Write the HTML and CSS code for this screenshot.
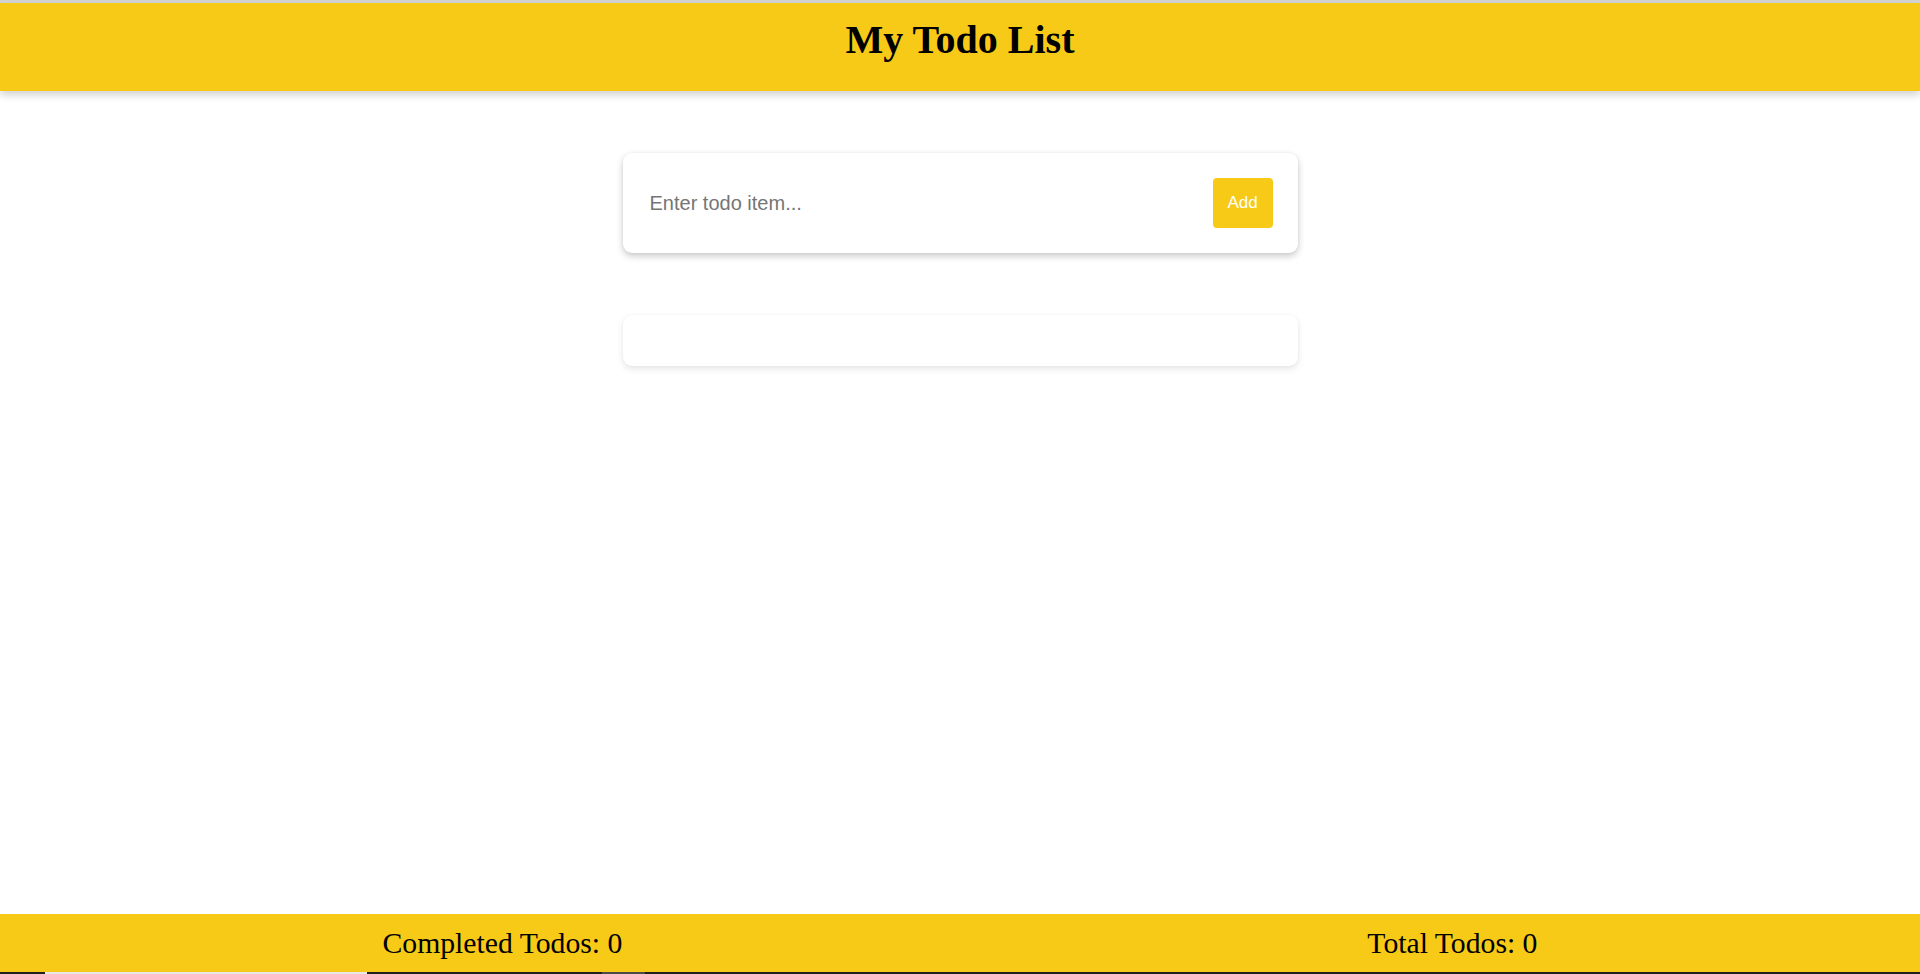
FILE: index.html
```html
<!DOCTYPE html>
<html lang="en">
<head>
<meta charset="utf-8">
<title>My Todo List</title>
<link rel="stylesheet" href="styles.css">
</head>
<body>
<div class="top-strip"></div>
<header class="app-header">
  <h1 class="app-title">My Todo List</h1>
</header>
<main class="app-main">
  <form class="card add-card" onsubmit="return false;">
    <input class="todo-input" type="text" placeholder="Enter todo item...">
    <button class="add-btn" type="submit">Add</button>
  </form>
  <div class="card list-card"></div>
</main>
<footer class="app-footer">
  <p class="stat">Completed Todos: 0</p>
  <p class="stat">Total Todos: 0</p>
</footer>
<div class="bottom-strip">
  <span class="seg seg-light"></span>
  <span class="seg seg-gap1"></span>
  <span class="seg seg-gray"></span>
</div>
</body>
</html>
```

FILE: styles.css
```css
html, body {
  margin: 0;
  padding: 0;
}

body {
  height: 974px;
  display: flex;
  flex-direction: column;
  background: #ffffff;
  font-family: "Liberation Serif", "Times New Roman", serif;
  overflow: hidden;
}

.top-strip {
  height: 3px;
  background: #d4d4d4;
  flex: none;
}

.app-header {
  height: 88px;
  flex: none;
  background: #f7ca18;
  box-shadow: 0 4px 8px rgba(0, 0, 0, 0.18);
  display: flex;
  justify-content: center;
  position: relative;
  z-index: 1;
}

.app-title {
  margin: 0;
  padding-top: 14px;
  font-size: 40px;
  font-weight: bold;
  line-height: 1.15;
  color: #000;
}

.app-main {
  flex: 1;
  display: flex;
  flex-direction: column;
  align-items: center;
  padding-top: 62px;
  gap: 62px;
}

.card {
  box-sizing: border-box;
  width: 675px;
  background: #fff;
  border-radius: 9px;
}

.add-card {
  margin: 0;
  height: 100px;
  padding: 0 25px 0 20px;
  display: flex;
  align-items: center;
  box-shadow: 0 3px 7px rgba(0, 0, 0, 0.22), 0 0 3px rgba(0, 0, 0, 0.04);
}

.todo-input {
  flex: 1;
  border: none;
  outline: none;
  padding: 0 7px;
  font-family: "Liberation Sans", Arial, sans-serif;
  font-size: 20px;
  color: #333;
  background: transparent;
  height: 40px;
}

.todo-input::placeholder {
  color: #757575;
}

.add-btn {
  width: 60px;
  height: 50px;
  border: none;
  border-radius: 4px;
  background: #f7ca18;
  color: #fff;
  font-family: "Liberation Sans", Arial, sans-serif;
  font-size: 17px;
  padding: 0;
  cursor: pointer;
}

.list-card {
  height: 51px;
  box-shadow: 0 3px 7px rgba(0, 0, 0, 0.1), 0 0 3px rgba(0, 0, 0, 0.03);
}

.app-footer {
  height: 58px;
  flex: none;
  box-sizing: border-box;
  background: #f7ca18;
  display: flex;
  justify-content: space-around;
  align-items: flex-start;
  padding: 12px 10px 0;
}

.stat {
  margin: 0;
  font-size: 29.7px;
  line-height: 1.15;
  color: #000;
}

.bottom-strip {
  height: 2px;
  flex: none;
  background: #202020;
  display: flex;
}

.seg {
  display: block;
  height: 2px;
}

.seg-light {
  margin-left: 45px;
  width: 322px;
  background: #e8e8e8;
}

.seg-gap1 {
  width: 235px;
}

.seg-gray {
  width: 43px;
  background: #4a4a4a;
}
```
